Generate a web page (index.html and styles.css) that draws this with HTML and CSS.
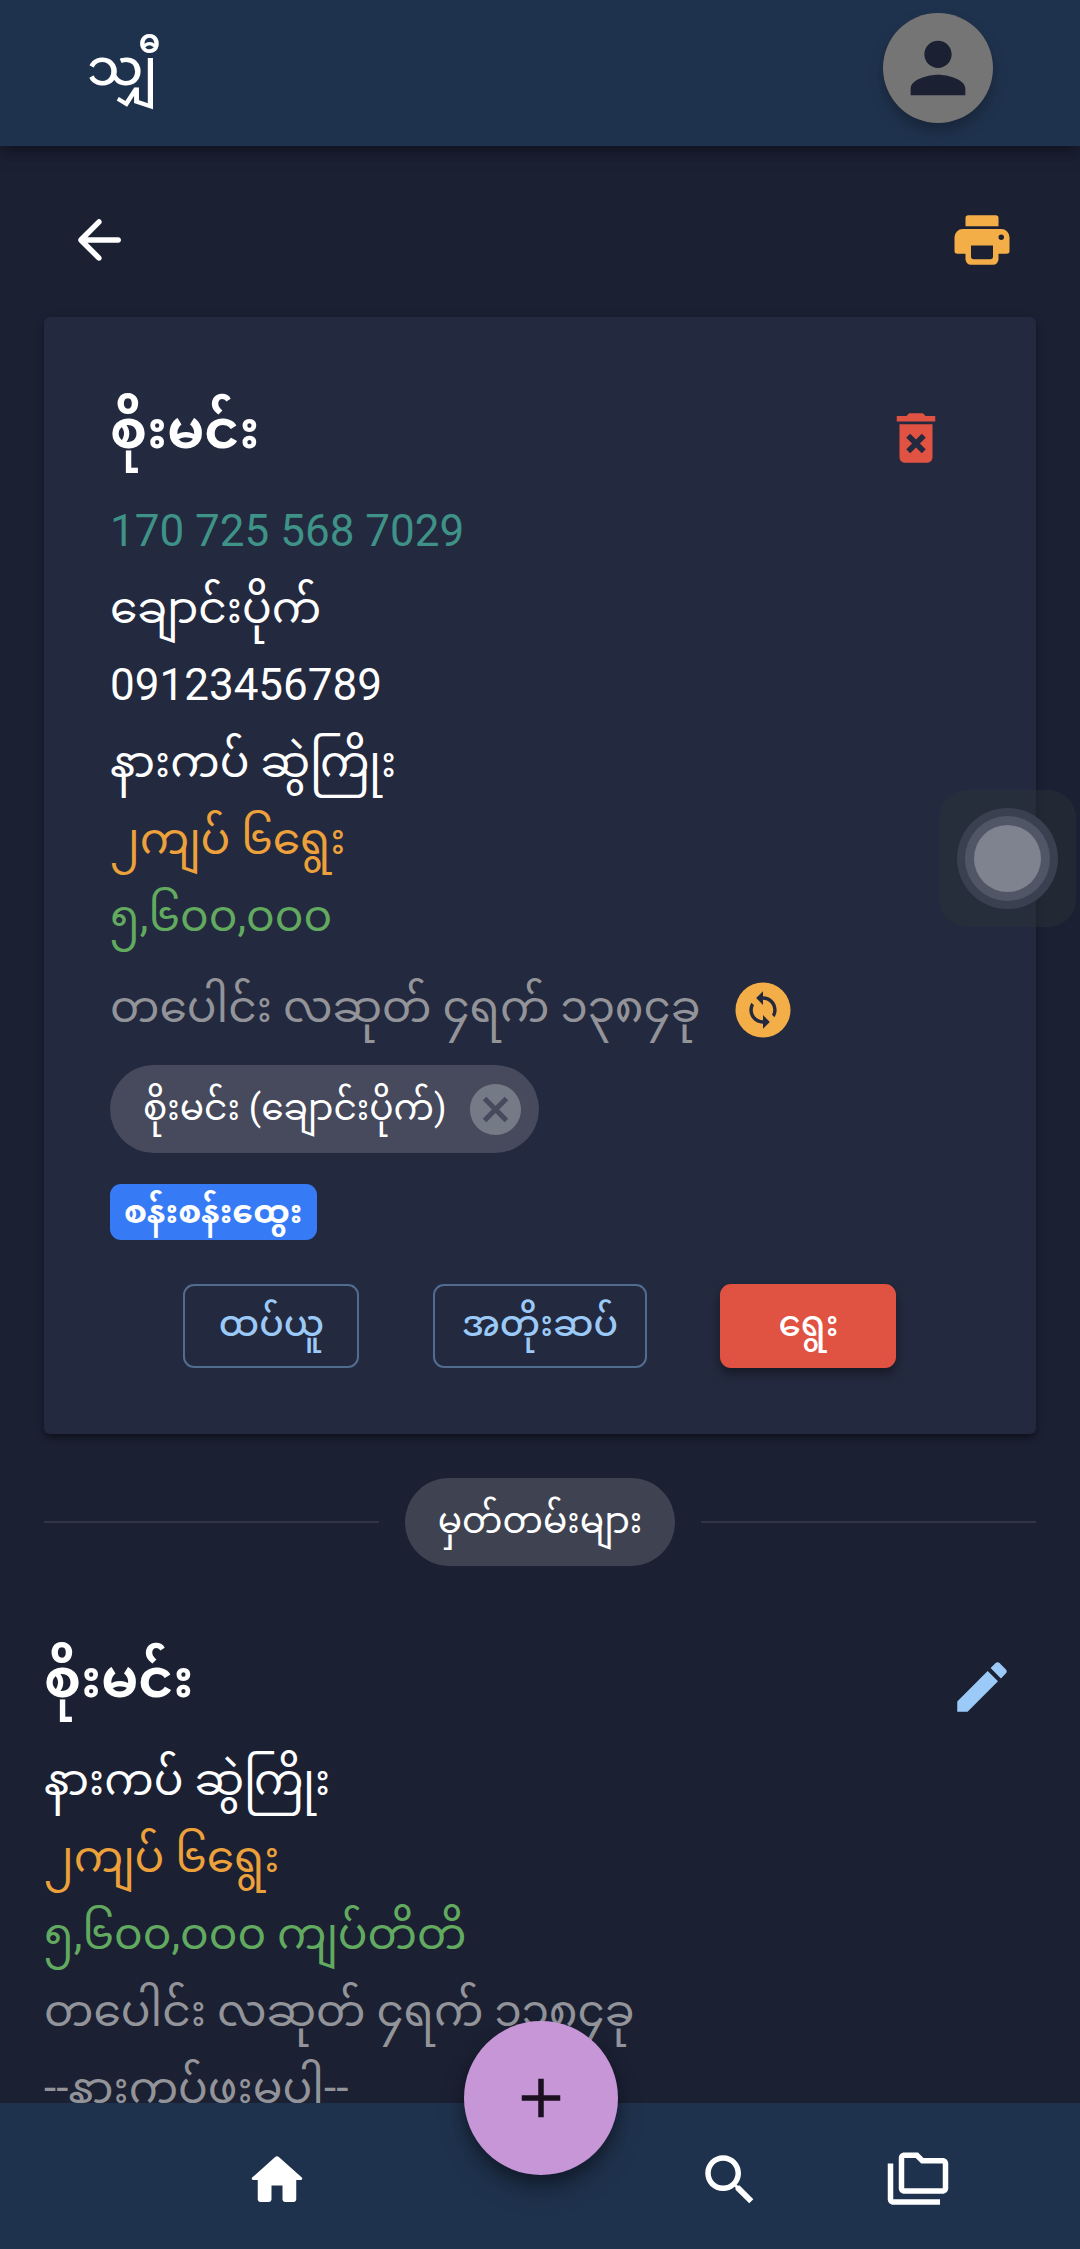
FILE: index.html
```html
<!DOCTYPE html>
<html lang="my">
<head>
<meta charset="utf-8">
<meta name="viewport" content="width=device-width, initial-scale=1">
<title>သျှီ</title>
<link rel="stylesheet" href="styles.css">
</head>
<body>
<header class="appbar">
  <h1 class="brand">သျှီ</h1>
  <button class="avatar" aria-label="Account"><svg class="icon" viewBox="0 0 24 24"><path d="M12 12c2.210 0 4-1.790 4-4s-1.790-4-4-4-4 1.790-4 4 1.790 4 4 4zm0 2c-2.670 0-8 1.340-8 4v2h16v-2c0-2.660-5.330-4-8-4z"/></svg></button>
</header>

<main class="page">
  <div class="toolbar">
    <button class="icon-btn" aria-label="Back"><svg class="icon" viewBox="0 0 24 24"><path d="M19 11H7.830l4.880-4.880c.39-.39.39-1.030 0-1.420-.39-.39-1.020-.39-1.410 0l-6.590 6.590c-.39.39-.39 1.020 0 1.410l6.590 6.590c.39.39 1.020.39 1.410 0 .39-.39.39-1.020 0-1.410L7.830 13H19c.55 0 1-.45 1-1s-.45-1-1-1z"/></svg></button>
    <button class="icon-btn amber" aria-label="Print"><svg class="icon" viewBox="0 0 24 24"><path fill-rule="evenodd" d="M7 3h10a1 1 0 0 1 1 1v3H6V4a1 1 0 0 1 1-1zM5 8h14a3 3 0 0 1 3 3v5a1 1 0 0 1-1 1h-3v2a2 2 0 0 1-2 2H8a2 2 0 0 1-2-2v-2H3a1 1 0 0 1-1-1v-5a3 3 0 0 1 3-3zm3 6v4a1 1 0 0 0 1 1h6a1 1 0 0 0 1-1v-4zm11-2a1 1 0 1 0 0-2 1 1 0 0 0 0 2z"/></svg></button>
  </div>

  <section class="card">
    <div class="heading">
      <h2 class="name">စိုးမင်း</h2>
      <button class="icon-btn red" aria-label="Delete"><svg class="icon" viewBox="0 0 24 24"><path d="M6 19c0 1.100.9 2 2 2h8c1.100 0 2-.9 2-2V7H6v12zm2.460-7.120 1.410-1.410L12 12.590l2.120-2.120 1.410 1.410L13.410 14l2.120 2.120-1.410 1.410L12 15.410l-2.120 2.120-1.410-1.410L10.590 14l-2.130-2.120zM15.500 4l-1-1h-5l-1 1H5v2h14V4z"/></svg></button>
    </div>
    <p class="line teal">170 725 568 7029</p>
    <p class="line">ချောင်းပိုက်</p>
    <p class="line">09123456789</p>
    <p class="line">နားကပ် ဆွဲကြိုး</p>
    <p class="line orange">၂ကျပ် ၆ရွေး</p>
    <p class="line green">၅,၆၀၀,၀၀၀</p>
    <div class="date-row">
      <p class="line muted">တပေါင်း လဆုတ် ၄ရက် ၁၃၈၄ခု</p>
      <button class="icon-btn amber" aria-label="Change date"><svg class="icon" viewBox="0 0 24 24"><circle cx="12" cy="12" r="10"/><path class="cut" transform="translate(12 12) scale(.62) translate(-12 -12)" d="M12 4V1L8 5l4 4V6c3.310 0 6 2.690 6 6 0 1.010-.25 1.970-.7 2.800l1.460 1.460C19.540 15.030 20 13.570 20 12c0-4.420-3.580-8-8-8zm0 14c-3.310 0-6-2.690-6-6 0-1.010.25-1.970.7-2.800L5.240 7.740C4.460 8.970 4 10.430 4 12c0 4.420 3.580 8 8 8v3l4-4-4-4v3z"/></svg></button>
    </div>
    <div class="chip">
      <span class="chip-text">စိုးမင်း (ချောင်းပိုက်)</span>
      <button class="chip-x" aria-label="Remove"><svg class="icon-chip" viewBox="2 2 20 20"><path d="M12 2C6.470 2 2 6.470 2 12s4.470 10 10 10 10-4.470 10-10S17.530 2 12 2zm5 13.590L15.590 17 12 13.410 8.410 17 7 15.590 10.590 12 7 8.410 8.410 7 12 10.590 15.590 7 17 8.410 13.410 12 17 15.590z"/></svg></button>
    </div>
    <div class="badge">စန်းစန်းထွေး</div>
    <div class="actions">
      <button class="btn">ထပ်ယူ</button>
      <button class="btn">အတိုးဆပ်</button>
      <button class="btn solid">ရွေး</button>
    </div>
  </section>

  <div class="divider"><span class="chip label"><span class="chip-text">မှတ်တမ်းများ</span></span></div>

  <section class="record">
    <div class="heading">
      <h2 class="name">စိုးမင်း</h2>
      <button class="icon-btn blue" aria-label="Edit"><svg class="icon" viewBox="0 0 24 24"><path d="M3 17.250V21h3.750L17.810 9.940l-3.750-3.750L3 17.250zM20.710 7.040c.39-.39.39-1.020 0-1.410l-2.340-2.340c-.39-.39-1.020-.39-1.410 0l-1.830 1.830 3.750 3.750 1.830-1.830z"/></svg></button>
    </div>
    <p class="line">နားကပ် ဆွဲကြိုး</p>
    <p class="line orange">၂ကျပ် ၆ရွေး</p>
    <p class="line green">၅,၆၀၀,၀၀၀ ကျပ်တိတိ</p>
    <p class="line muted">တပေါင်း လဆုတ် ၄ရက် ၁၃၈၄ခု</p>
    <p class="line muted">--နားကပ်ဖးမပါ--</p>
  </section>
</main>

<div class="assist" aria-hidden="true"><span class="assist-ring"><span class="assist-mid"><span class="assist-dot"></span></span></span></div>

<nav class="bottom">
  <a class="nav-home" href="#" aria-label="Home"><svg class="icon" viewBox="0 0 24 24"><path d="M10 19v-5h4v5c0 .55.45 1 1 1h3c.55 0 1-.45 1-1v-7h1.700c.46 0 .68-.57.33-.87L12.670 3.600c-.38-.34-.96-.34-1.340 0l-8.360 7.530c-.34.3-.13.87.33.87H5v7c0 .55.45 1 1 1h3c.55 0 1-.45 1-1z"/></svg></a>
  <a class="nav-search" href="#" aria-label="Search"><svg class="icon" viewBox="0 0 24 24"><path d="M15.500 14h-.79l-.28-.27C15.410 12.590 16 11.110 16 9.500 16 5.910 13.090 3 9.500 3S3 5.910 3 9.500 5.910 16 9.500 16c1.610 0 3.090-.59 4.230-1.570l.27.28v.79l5 4.990L20.490 19l-4.990-5zm-6 0C7.010 14 5 11.990 5 9.500S7.010 5 9.500 5 14 7.010 14 9.500 11.990 14 9.500 14z"/></svg></a>
  <a class="nav-files" href="#" aria-label="Folders"><svg class="icon" viewBox="0 0 24 24"><path d="M3 6H1v13c0 1.100.9 2 2 2h17v-2H3V6zM21 4h-7l-2-2H7c-1.100 0-1.990.9-1.990 2L5 15c0 1.100.9 2 2 2h14c1.100 0 2-.9 2-2V6c0-1.100-.9-2-2-2zm0 11H7V4h4.170l2 2H21v9z"/></svg></a>
  <button class="fab" aria-label="Add"><svg class="icon" viewBox="0 0 24 24"><path d="M19 13h-6v6h-2v-6H5v-2h6V5h2v6h6v2z"/></svg></button>
</nav>
</body>
</html>
```
FILE: styles.css
```css
* { box-sizing: border-box; }
html { height: 100%; overflow: hidden; }
body {
  margin: 0;
  height: 100vh;
  overflow: hidden;
  display: flex;
  flex-direction: column;
  background: #1b2033;
  color: #fff;
  font-family: Roboto, "Noto Sans Myanmar", "Noto Sans", sans-serif;
  font-size: 44px;
}
h1, h2, p { margin: 0; }
button { font: inherit; border: 0; padding: 0; background: none; color: inherit; }
.icon { display: block; width: 66px; height: 66px; fill: currentColor; }
.cut { fill: #23293e; }

.appbar {
  flex: none;
  height: 146px;
  padding: 0 87px 10px;
  display: flex;
  align-items: center;
  justify-content: space-between;
  background: #1f324d;
  box-shadow: 0 6px 11px -3px rgba(0,0,0,.3), 0 10px 16px rgba(0,0,0,.15);
}
.brand { font-size: 50px; font-weight: 500; line-height: 88px; }
.avatar {
  width: 110px;
  height: 110px;
  border-radius: 50%;
  display: grid;
  place-items: center;
  background: #757575;
  color: #1b2033;
  box-shadow: 0 8px 14px rgba(0,0,0,.25);
}
.avatar .icon { width: 82px; height: 82px; }

.page { flex: 1; min-height: 0; overflow: hidden; padding: 44px 44px 0; }
.toolbar { display: flex; justify-content: space-between; align-items: center; padding: 0 21px 28px 22px; height: 127px; }
.amber { color: #f4ae48; }
.red { color: #e05241; }
.blue { color: #9ccaf8; }
.teal { color: #3e9287; }
.orange { color: #eda13b; }
.green { color: #62aa5f; }
.muted { color: #939499; }

.card {
  background: #23293e;
  border-radius: 6px;
  padding: 66px;
  box-shadow: 0 6px 6px -3px rgba(0,0,0,.3), 0 3px 10px rgba(0,0,0,.25);
}
.heading { display: flex; justify-content: space-between; align-items: center; height: 110px; }
.name { padding-bottom: 16px; font-size: 53px; line-height: 88px; font-weight: 700; }
.heading .icon-btn { margin-right: 21px; }
.line { line-height: 77px; white-space: nowrap; }
.date-row { display: flex; align-items: center; gap: 29px; height: 110px; }
.date-row .line { padding-bottom: 6px; }
.chip {
  display: inline-flex;
  align-items: center;
  gap: 23px;
  height: 88px;
  padding: 0 18px 0 33px;
  border-radius: 44px;
  background: #464a5c;
  font-size: 36px;
  white-space: nowrap;
}
.chip-text { padding-top: 4px; }
.chip-x { color: #747a86; }
.icon-chip { display: block; width: 51px; height: 51px; fill: currentColor; }
.badge {
  width: fit-content;
  margin-top: 31px;
  height: 56px;
  padding: 0 14px;
  line-height: 56px;
  border-radius: 11px;
  background: #367bf5;
  font-size: 33px;
  font-weight: 700;
}
.actions { display: flex; justify-content: space-evenly; margin-top: 44px; }
.btn {
  min-width: 176px;
  height: 84px;
  padding: 2px 27px 0;
  border: 2px solid #526c90;
  border-radius: 11px;
  color: #9ccaf8;
  font-size: 36px;
  font-weight: 500;
}
.solid { border-color: #e05241; background: #e05241; color: #fff; box-shadow: 0 6px 8px rgba(0,0,0,.35); }

.divider { display: flex; align-items: center; gap: 26px; margin: 44px 0 66px; }
.divider::before, .divider::after { content: ""; flex: 1; height: 2px; background: #303446; }
.label { padding: 0 33px; background: #3f4351; }

.bottom {
  position: relative;
  flex: none;
  height: 146px;
  padding: 8px 68px 0 44px;
  display: grid;
  grid-template-columns: 466fr 125fr 188fr 188fr;
  align-items: center;
  justify-items: center;
  background: #1f324d;
}
.bottom a { color: #fff; }
.nav-home { grid-column: 1; }
.nav-search { grid-column: 3; }
.nav-files { grid-column: 4; }
.fab {
  position: absolute;
  left: 50%;
  top: -82px;
  width: 154px;
  height: 154px;
  margin-left: -76px;
  border-radius: 50%;
  display: grid;
  place-items: center;
  background: #c696d6;
  color: #1b1020;
  box-shadow: 0 8px 14px rgba(0,0,0,.3), 0 16px 28px rgba(0,0,0,.2);
}
.assist {
  position: fixed;
  right: 4px;
  top: 790px;
  width: 137px;
  height: 137px;
  border-radius: 28px;
  display: grid;
  place-items: center;
  background: rgba(44,54,56,.4);
}
.assist-ring, .assist-mid, .assist-dot { display: grid; place-items: center; border-radius: 50%; }
.assist-ring { width: 101px; height: 101px; background: #3a404f; }
.assist-mid { width: 85px; height: 85px; background: #505665; }
.assist-dot { width: 67px; height: 67px; background: #7e838f; }
```
